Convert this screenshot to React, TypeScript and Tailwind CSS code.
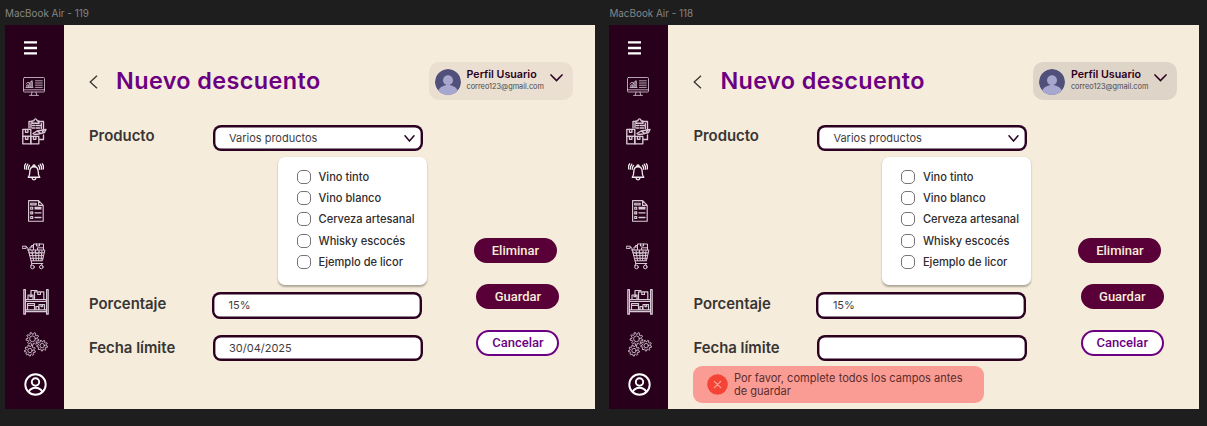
import React from "react";

const stroke = {
  fill: "none",
  stroke: "#d9cbd5",
  strokeWidth: 1,
  strokeLinecap: "round" as const,
  strokeLinejoin: "round" as const,
};

function MenuIcon() {
  return (
    <svg className="mt-4 ml-[19px] h-[14px] w-[13px]" viewBox="0 0 13 14" fill="#fff">
      <path d="M0 0.2h13v2.4H0zM0 5.8h13v2.4H0zM0 11.2h13v2.4H0z" />
    </svg>
  );
}

function MonitorIcon() {
  return (
    <svg className="mt-[22px] ml-[18px] h-5 w-[22px]" viewBox="0 0 22 20" {...stroke} strokeWidth={0.8}>
      <rect x="0.5" y="0.5" width="21" height="14.5" rx="1" />
      <path d="M0.5 12.8h21M9 15l-.6 3M13 15l.6 3M6.5 18.4h9" />
      <path d="M3 10.5h7M3.8 10V8h1.4v2M6 10V6.5h1.2V10M8.2 10V4.5h1.2V10M3 6.8l2-1.6 1.5.8 2.5-2.5" />
      <path d="M12.5 3.8h6.8M12.5 6h6.8M12.5 8.2h6.8M12.5 10.4h6.8" />
    </svg>
  );
}

function InventoryIcon() {
  return (
    <svg className="mt-[21px] ml-[17px] h-[27px] w-[26px]" viewBox="0 0 26 27" {...stroke} strokeWidth={1.35}>
      <path d="M7 10V3.5h3M16 3.5h5.5V13M21.5 17v4.5h-4M10 2.8h2c0-2.6 3-2.6 3 0h2v2.4h-7z" />
      <path d="M9 10V5.5M19.3 5.5v5M10.5 7.5h2M14 7.5h4M10.5 10h2M14 10h3.5" />
      <rect x="0.8" y="11.3" width="8" height="7" />
      <rect x="0.8" y="18.3" width="8" height="7.5" />
      <rect x="8.8" y="18.3" width="8" height="7.5" />
      <path d="M3.5 11.5v2.8h2.4v-2.8M3.5 18.5v2.8h2.4v-2.8M11.5 18.5v2.8h2.4v-2.8" />
      <path d="M11 15.5l4-2.500 9-1.500-1.500 3-6 1.500-4 .5zM15 13l3 1.800M20 12l1 2.500" />
    </svg>
  );
}

function BellIcon() {
  return (
    <svg className="mt-[18px] ml-[19px] h-[19px] w-5" viewBox="0 0 20 18" preserveAspectRatio="none" {...stroke} stroke="#f1e9ee" strokeWidth={1.3}>
      <path d="M4.200 13.500c1.600-1.400 1.600-3 1.600-5.200 0-2.700 1.500-4.800 4.200-4.800s4.200 2.100 4.200 4.800c0 2.200 0 3.800 1.600 5.200zM8.800 3.300c0-1.800 2.400-1.800 2.400 0M8 14c.3 2.600 3.700 2.600 4 0" />
      <path d="M3.800 1.200C2.600 2.400 2.200 4 2.200 6M1.600.8C.5 2 .4 4 .5 5.500M5.500 2.400c-1 1-1.300 2-1.300 3.600" />
      <path d="M16.200 1.200c1.200 1.200 1.600 2.800 1.600 4.800M18.400.8c1.100 1.200 1.200 3.200 1.100 4.700M14.500 2.400c1 1 1.300 2 1.300 3.600" />
    </svg>
  );
}

function ReportIcon() {
  return (
    <svg className="mt-[18px] ml-[23px] h-[22px] w-4" viewBox="0 0 16 22" {...stroke} strokeWidth={1.15}>
      <path d="M.6.6h10l4.600 4.800v15.800H.6zM10.600.8v4.600h4.600" />
      <path d="M2.700 3.200h5.500v1.600H2.700z" />
      <path d="M2.700 7.200h2v2h-2zM2.700 11.800h2v2h-2zM2.700 16.500h2v2h-2z" />
      <path d="M7 7.500h6M7 8.900h6M7 12.800h6M7 17.500h6" strokeWidth="1.3" />
    </svg>
  );
}

function CartIcon() {
  return (
    <svg className="mt-[21px] ml-[17px] h-[27px] w-6" viewBox="0 0 24 27" {...stroke}>
      <path d="M.6 3.200h3.600v2.200H.6zM4.200 3.800l1.600 1 4 15.700M5.500 7h17.400l-2.500 10.800H9M9.800 20.500h11" />
      <path d="M8 6.600V4h3.500v2.600M11.500 6.600V1h10v5.600M9.500 3.800V2.500h2M14.500 1v2h3V1M15.500 6.600V4.800h6" />
      <path d="M6.700 9.800h15.400M7.500 12.600h14M8.300 15.300h12.700M10 7.500l1.500 10M13.500 7.500l.7 10M17 7.500l-.4 10M20 7.500l-1 10" />
      <path d="M7.500 9l2.500 2 2.500-2 2.500 2 2.500-2 2.500 2" strokeWidth=".8" />
      <path d="M10 20.500l-1.200 2M19 20.500l1.500 2" />
      <circle cx="10.500" cy="24" r="1.800" />
      <circle cx="19.300" cy="24" r="1.800" />
    </svg>
  );
}

function ShelfIcon() {
  return (
    <svg className="mt-[19px] ml-[17.500px] h-[26px] w-[26px]" viewBox="0 0 26 26" {...stroke} strokeWidth={1.2}>
      <path d="M.8.6h1.600v24.600H.8zM23.600.6h1.600v24.600h-1.600z" />
      <path d="M2.500 10.500h21v1.800h-21zM2.500 20.800h21v1.800h-21z" />
      <path d="M5 10.200V6h5v4.200M7 6v1.700h1.600V6M8 5.700V1.500h6M11.500 10.200V2.800h9.300v7.400M14.800 3v2.500h2.600V3" />
      <path d="M4.500 20.500v-6h7v6M4.500 16.300h7M13 20.500v-3h2.500v3M16 20.500v-5h5.500v5M18 15.600v2h1.600v-2" />
    </svg>
  );
}

function gearPath(cx: number, cy: number, outer: number, inner: number) {
  const teeth = 9;
  const points: string[] = [];
  for (let i = 0; i < teeth; i++) {
    const base = (i / teeth) * Math.PI * 2;
    const step = (Math.PI * 2) / teeth;
    [
      [0, inner],
      [0.15, outer],
      [0.5, outer],
      [0.65, inner],
    ].forEach(([offset, radius]) => {
      const angle = base + offset * step;
      points.push(`${(cx + Math.cos(angle) * radius).toFixed(2)} ${(cy + Math.sin(angle) * radius).toFixed(2)}`);
    });
  }
  return `M${points.join("L")}Z`;
}

function GearsIcon() {
  return (
    <svg className="mt-[17px] ml-[19px] h-[25px] w-6" viewBox="0 0 24 25" {...stroke} strokeWidth={0.85}>
      <path d={gearPath(8.5, 6.8, 6.4, 4.6)} />
      <circle cx="8.5" cy="6.8" r="2.9" />
      <path d={gearPath(18.2, 13.6, 5.4, 3.9)} />
      <circle cx="18.2" cy="13.6" r="2.2" />
      <path d={gearPath(6, 18.5, 5.5, 4)} />
      <circle cx="6" cy="18.5" r="2.2" />
    </svg>
  );
}

function AccountIcon() {
  return (
    <svg className="mt-4 ml-[19px] h-[23px] w-[23px]" viewBox="0 0 23 23" fill="none" stroke="#fff" strokeWidth="1.9">
      <circle cx="11.5" cy="11.5" r="10.2" />
      <circle cx="11.5" cy="9" r="3.7" />
      <path d="M4.600 18.900c1.600-2.900 4-4.100 6.900-4.100s5.300 1.200 6.900 4.100" />
    </svg>
  );
}

function Sidebar() {
  return (
    <nav className="flex h-full w-[59px] shrink-0 flex-col items-start bg-[#28001c]">
      <MenuIcon />
      <MonitorIcon />
      <InventoryIcon />
      <BellIcon />
      <ReportIcon />
      <CartIcon />
      <ShelfIcon />
      <GearsIcon />
      <AccountIcon />
    </nav>
  );
}

function Avatar() {
  return (
    <svg className="h-[26px] w-[26px] overflow-hidden rounded-full" viewBox="0 0 26 26">
      <circle cx="13" cy="13" r="13" fill="#50507a" />
      <circle cx="13" cy="11.3" r="5" fill="#a7a6cf" />
      <path d="M2.500 23c2-5 6-7 10.500-7s8.500 2 10.500 7l-4 3h-13z" fill="#a7a6cf" />
    </svg>
  );
}

function Profile({ active }: { active: boolean }) {
  return (
    <button
      className={`mt-[37px] flex h-[38px] w-36 shrink-0 items-start rounded-[10px] pl-1.5 text-left ${
        active ? "bg-[#dfd4c8]" : "bg-[#eadfd0]"
      }`}
    >
      <span className="mt-[7px]">
        <Avatar />
      </span>
      <span className="mt-[7px] ml-[5.5px] flex w-[78px] flex-col whitespace-nowrap">
        <span className="text-[10.7px] leading-[12px] font-semibold text-[#2b0020]">Perfil Usuario</span>
        <span className="text-[7.35px] leading-[11px] text-[#4d4548]">correo123@gmail.com</span>
      </span>
      <svg className="mt-[12px] ml-[5px] h-2 w-[13px]" viewBox="0 0 13 8" fill="none" stroke="#2b0020" strokeWidth="1.5" strokeLinecap="round">
        <path d="M1 .9l5.500 5.700L12 .9" />
      </svg>
    </button>
  );
}

const products = ["Vino tinto", "Vino blanco", "Cerveza artesanal", "Whisky escocés", "Ejemplo de licor"];

const fieldBox =
  "flex w-[210px] shrink-0 items-center rounded-[8px] bg-white pl-4 text-[11px] text-[#3f3b3d] shadow-[inset_0_0_0_2.4px_#2b0020]";
const fieldLabel = "w-[124px] shrink-0 text-[14.9px] font-semibold leading-[20px] text-[#383533]";

function ProductMenu() {
  return (
    <div className="mt-[5.5px] ml-[189px] flex h-[128px] w-[149px] flex-col rounded-[7px] bg-white pt-[10px] pl-[19px] shadow-[0_1.5px_2px_rgba(0,0,0,0.3)]">
      {products.map((product) => (
        <label key={product} className="flex h-[21.2px] items-center gap-[7.5px]">
          <span className="h-[14px] w-[14px] rounded-[5px] border border-[#787276]" />
          <span className="text-[11.1px] leading-[14px] font-medium whitespace-nowrap text-[#2f2c2e]">{product}</span>
        </label>
      ))}
    </div>
  );
}

function ErrorAlert() {
  return (
    <div className="mt-[5px] flex h-[37px] w-[291px] items-start rounded-[9px] bg-[#fb9c94] pl-[13.5px]">
      <svg className="mt-[7.5px] h-[21px] w-[21px]" viewBox="0 0 21 21">
        <circle cx="10.5" cy="10.5" r="10.3" fill="#f54336" />
        <path d="M7.300 7.300l6.400 6.400M13.700 7.300l-6.400 6.400" stroke="#fba69f" strokeWidth="1.2" strokeLinecap="round" />
      </svg>
      <p className="mt-[5.5px] ml-1.5 text-[11.05px] leading-[13.5px] whitespace-nowrap text-[#5a2c2c]">
        Por favor, complete todos los campos antes
        <br />
        de guardar
      </p>
    </div>
  );
}

function Actions() {
  const base = "flex w-[83px] items-center justify-center rounded-full text-[13px] font-medium font-['Roboto',sans-serif]";
  return (
    <div className="ml-[51px] flex w-[86px] shrink-0 flex-col pt-[113px]">
      <button className={`${base} h-[25px] bg-[#590038] text-[#f6ecdb]`}>Eliminar</button>
      <button className={`${base} mt-[21px] ml-[2.4px] h-[25px] bg-[#590038] text-[#f6ecdb]`}>Guardar</button>
      <button className={`${base} mt-[20.5px] ml-[2.4px] h-[26.5px] border-2 border-[#6c0082] bg-white text-[#6c0082]`}>
        Cancelar
      </button>
    </div>
  );
}

function DiscountScreen({ name, date, error }: { name: string; date: string; error: boolean }) {
  return (
    <section className="w-[590px] shrink-0">
      <h2 className="h-[25px] pt-[7px] text-[9.9px] leading-[12px] text-[#858585]">{name}</h2>
      <div className="flex h-[384px] overflow-hidden">
        <Sidebar />
        <main className="h-full w-[531px] bg-[#f6ecdb] pl-[25px]">
          <header className="flex h-[100px] items-start">
            <svg className="mt-[50px] h-[14px] w-[9px]" viewBox="0 0 9 14" fill="none" stroke="#383533" strokeWidth="1.3">
              <path d="M8 .7L1.200 7 8 13.300" />
            </svg>
            <h1 className="mt-[41px] ml-[18px] w-[313px] shrink-0 text-[23.4px] leading-[30px] font-semibold tracking-[0.4px] text-[#6c0082]">
              Nuevo descuento
            </h1>
            <Profile active={error} />
          </header>
          <div className="flex">
            <form className="w-[334px] shrink-0">
              <div className="flex items-center">
                <span className={`${fieldLabel} pb-1`}>Producto</span>
                <span className={`${fieldBox} h-[26px] justify-between pr-2`}>
                  Varios productos
                  <svg className="h-[7px] w-[11px]" viewBox="0 0 11 7" fill="none" stroke="#2b0020" strokeWidth="1.5" strokeLinecap="round">
                    <path d="M1 .8l4.500 5.200L10 .8" />
                  </svg>
                </span>
              </div>
              <ProductMenu />
              <div className="mt-[7.5px] flex items-center">
                <span className={`${fieldLabel} pb-[3px]`}>Porcentaje</span>
                <span className={`${fieldBox} -ml-px h-[27px] pl-[16.5px]`}>15%</span>
              </div>
              <div className="mt-[15.5px] flex items-center">
                <span className={fieldLabel}>Fecha límite</span>
                <span className={`${fieldBox} h-[26.5px]`}>{date}</span>
              </div>
              {error && <ErrorAlert />}
            </form>
            <Actions />
          </div>
        </main>
      </div>
    </section>
  );
}

export default function App() {
  return (
    <div className="flex h-[426px] w-[1207px] gap-[14.4px] overflow-hidden bg-[#1e1e1e] pl-[5px] font-['Inter',sans-serif]">
      <DiscountScreen name="MacBook Air - 119" date="30/04/2025" error={false} />
      <DiscountScreen name="MacBook Air - 118" date="" error />
    </div>
  );
}
